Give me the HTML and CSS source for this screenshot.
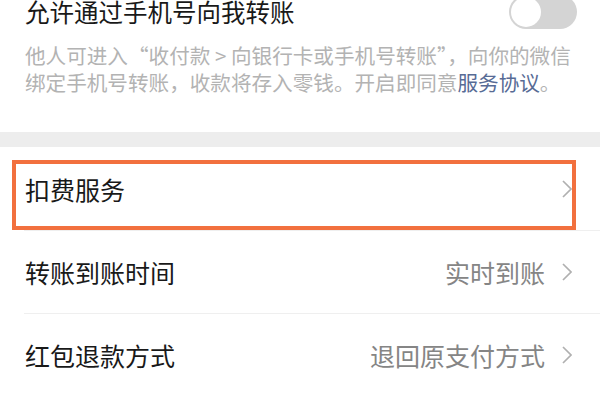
FILE: index.html
```html
<!DOCTYPE html>
<html lang="zh">
<head>
<meta charset="utf-8">
<link rel="stylesheet" href="styles.css">
</head>
<body>
<section class="top">
  <div class="title-row">
    <span class="title">允许通过手机号向我转账</span>
    <span class="toggle"><span class="knob"></span></span>
  </div>
  <p class="desc">他人可进入“收付款 &gt; 向银行卡或手机号转账”，向你的微信绑定手机号转账，收款将存入零钱。开启即同意<span class="link">服务协议</span>。</p>
</section>
<div class="band"></div>
<ul class="list">
  <li class="row first">
    <span class="label">扣费服务</span>
    <span class="right"><svg class="chev" width="10" height="18" viewBox="0 0 10 18"><polyline points="1,1 9,9 1,17" fill="none" stroke="#b0b0b0" stroke-width="1.7"/></svg></span>
    <span class="highlight"></span>
  </li>
  <li class="row">
    <span class="label">转账到账时间</span>
    <span class="right"><span class="value">实时到账</span><svg class="chev" width="10" height="18" viewBox="0 0 10 18"><polyline points="1,1 9,9 1,17" fill="none" stroke="#b0b0b0" stroke-width="1.7"/></svg></span>
  </li>
  <li class="row">
    <span class="label">红包退款方式</span>
    <span class="right"><span class="value">退回原支付方式</span><svg class="chev" width="10" height="18" viewBox="0 0 10 18"><polyline points="1,1 9,9 1,17" fill="none" stroke="#b0b0b0" stroke-width="1.7"/></svg></span>
  </li>
</ul>
</body>
</html>
```
FILE: styles.css
```css
html, body {
  margin: 0;
  padding: 0;
  background: #ffffff;
  font-family: "Noto Sans CJK SC", "Noto Sans", sans-serif;
  overflow: hidden;
}
.top {
  margin-top: -10px;
  padding: 0 23px 0 25px;
  height: 142px;
  box-sizing: border-box;
}
.title-row {
  display: flex;
  align-items: center;
  justify-content: space-between;
  height: 44px;
}
.title {
  font-size: 24.5px;
  color: #191919;
  line-height: 1;
}
.toggle {
  width: 68px;
  height: 34px;
  border-radius: 17px;
  background: #d4d4d4;
  display: flex;
  align-items: center;
  padding: 0 2px;
  box-sizing: border-box;
  margin-top: -1px;
}
.knob {
  width: 30px;
  height: 30px;
  border-radius: 50%;
  background: #ffffff;
}
.desc {
  margin: 8px 0 0 0;
  font-size: 20.6px;
  line-height: 27px;
  color: #b3b3b3;
}
.link {
  color: #576b95;
}
.band {
  height: 15px;
  background: #ededed;
}
.list {
  list-style: none;
  margin: 0;
  padding: 0;
}
.row {
  position: relative;
  display: flex;
  align-items: center;
  justify-content: space-between;
  height: 82px;
  padding: 0 28px 0 25px;
  box-sizing: border-box;
}
.row.first {
  height: 83px;
}
.row + .row::before {
  content: "";
  position: absolute;
  left: 24px;
  right: 0;
  top: -1px;
  height: 1px;
  background: #efefef;
}
.row + .row {
  margin-top: 1px;
}
.label {
  font-size: 25px;
  color: #191919;
}
.right {
  display: flex;
  align-items: center;
  gap: 17px;
}
.value {
  font-size: 25px;
  color: #858585;
}
.chev {
  display: block;
}
.highlight {
  position: absolute;
  left: 12px;
  right: 24px;
  top: 13px;
  bottom: 0;
  border: 4px solid #f2703e;
  pointer-events: none;
}
```
